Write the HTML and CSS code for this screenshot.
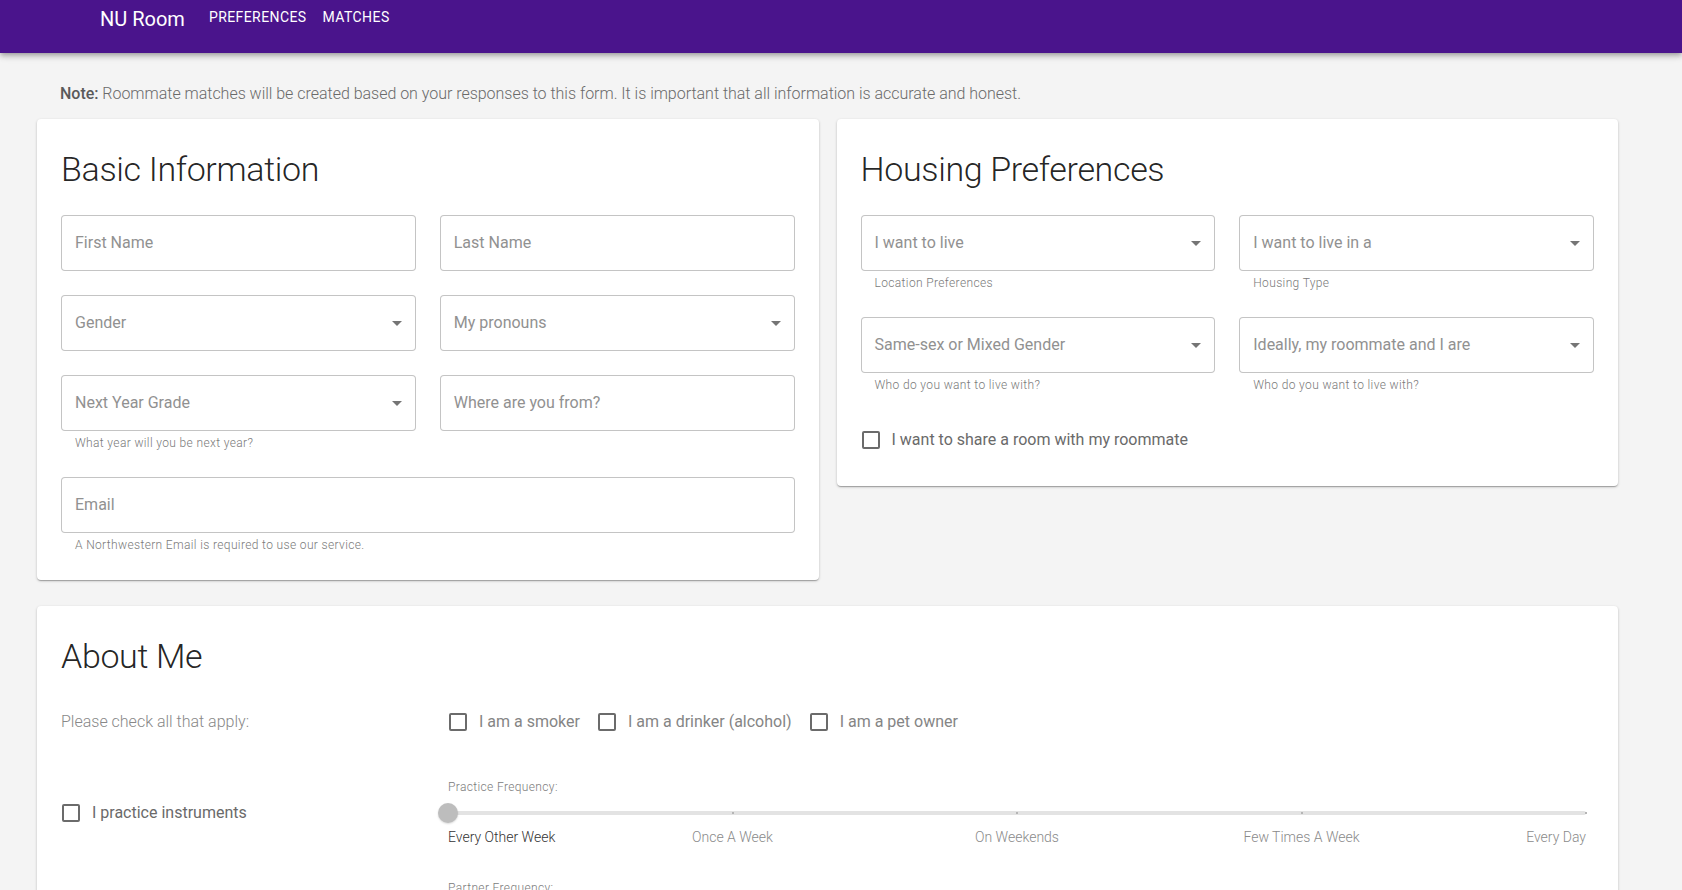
FILE: index.html
```html
<!DOCTYPE html>
<html lang="en">
<head>
<meta charset="utf-8">
<title>NU Room</title>
<link rel="stylesheet" href="styles.css">
</head>
<body>
<header class="appbar">
  <div class="brand">NU Room</div>
  <nav class="nav">
    <a class="nav-link" href="#">Preferences</a>
    <a class="nav-link" href="#">Matches</a>
  </nav>
</header>

<main class="page">
  <p class="note"><strong>Note:</strong> Roommate matches will be created based on your responses to this form. It is important that all information is accurate and honest.</p>

  <div class="top-row">
    <section class="card card-basic">
      <h2 class="card-title">Basic Information</h2>
      <div class="field-grid">
        <div class="field">
          <div class="input"><span class="ph">First Name</span></div>
        </div>
        <div class="field">
          <div class="input"><span class="ph">Last Name</span></div>
        </div>
        <div class="field">
          <div class="input"><span class="ph">Gender</span><svg class="arrow" viewBox="0 0 24 24"><path d="M7 10l5 5 5-5z"/></svg></div>
        </div>
        <div class="field">
          <div class="input"><span class="ph">My pronouns</span><svg class="arrow" viewBox="0 0 24 24"><path d="M7 10l5 5 5-5z"/></svg></div>
        </div>
        <div class="field">
          <div class="input"><span class="ph">Next Year Grade</span><svg class="arrow" viewBox="0 0 24 24"><path d="M7 10l5 5 5-5z"/></svg></div>
          <p class="helper">What year will you be next year?</p>
        </div>
        <div class="field">
          <div class="input"><span class="ph">Where are you from?</span></div>
        </div>
        <div class="field field-wide">
          <div class="input"><span class="ph">Email</span></div>
          <p class="helper">A Northwestern Email is required to use our service.</p>
        </div>
      </div>
    </section>

    <section class="card card-housing">
      <h2 class="card-title">Housing Preferences</h2>
      <div class="field-grid">
        <div class="field">
          <div class="input"><span class="ph">I want to live</span><svg class="arrow" viewBox="0 0 24 24"><path d="M7 10l5 5 5-5z"/></svg></div>
          <p class="helper">Location Preferences</p>
        </div>
        <div class="field">
          <div class="input"><span class="ph">I want to live in a</span><svg class="arrow" viewBox="0 0 24 24"><path d="M7 10l5 5 5-5z"/></svg></div>
          <p class="helper">Housing Type</p>
        </div>
        <div class="field">
          <div class="input"><span class="ph">Same-sex or Mixed Gender</span><svg class="arrow" viewBox="0 0 24 24"><path d="M7 10l5 5 5-5z"/></svg></div>
          <p class="helper">Who do you want to live with?</p>
        </div>
        <div class="field">
          <div class="input"><span class="ph">Ideally, my roommate and I are</span><svg class="arrow" viewBox="0 0 24 24"><path d="M7 10l5 5 5-5z"/></svg></div>
          <p class="helper">Who do you want to live with?</p>
        </div>
      </div>
      <div class="share-row">
        <label class="check"><span class="cbox"><span class="box"></span></span><span class="check-text dark">I want to share a room with my roommate</span></label>
      </div>
    </section>
  </div>

  <section class="card card-about">
    <h2 class="card-title">About Me</h2>
    <div class="about-grid">
      <div class="about-left row-apply">
        <span class="apply-text">Please check all that apply:</span>
      </div>
      <div class="about-right row-apply">
        <div class="check-group">
          <label class="check"><span class="cbox"><span class="box"></span></span><span class="check-text">I am a smoker</span></label>
          <label class="check"><span class="cbox"><span class="box"></span></span><span class="check-text">I am a drinker (alcohol)</span></label>
          <label class="check"><span class="cbox"><span class="box"></span></span><span class="check-text">I am a pet owner</span></label>
        </div>
      </div>

      <div class="about-left row-instr">
        <label class="check"><span class="cbox"><span class="box"></span></span><span class="check-text dark">I practice instruments</span></label>
      </div>
      <div class="about-right">
        <div class="slider-block">
          <p class="slider-label">Practice Frequency:</p>
          <div class="slider">
            <div class="track">
              <span class="tick"></span><span class="tick"></span><span class="tick"></span><span class="tick"></span>
            </div>
            <span class="thumb"></span>
          </div>
          <div class="marks">
            <span class="mark m1 active">Every Other Week</span>
            <span class="mark m2">Once A Week</span>
            <span class="mark m3">On Weekends</span>
            <span class="mark m4">Few Times A Week</span>
            <span class="mark m5">Every Day</span>
          </div>
        </div>
        <div class="slider-block">
          <p class="slider-label">Partner Frequency:</p>
          <div class="slider">
            <div class="track">
              <span class="tick"></span><span class="tick"></span><span class="tick"></span><span class="tick"></span>
            </div>
            <span class="thumb"></span>
          </div>
          <div class="marks">
            <span class="mark m1 active">Every Other Week</span>
            <span class="mark m2">Once A Week</span>
            <span class="mark m3">On Weekends</span>
            <span class="mark m4">Few Times A Week</span>
            <span class="mark m5">Every Day</span>
          </div>
        </div>
      </div>
    </div>
  </section>
</main>
</body>
</html>
```

FILE: styles.css
```css
* {
  box-sizing: border-box;
}

html, body {
  margin: 0;
  padding: 0;
}

body {
  background: #f4f4f4;
  font-family: "Roboto", "Liberation Sans", sans-serif;
  color: rgba(0, 0, 0, 0.87);
}

/* ---------- App bar ---------- */
.appbar {
  height: 53px;
  background: #4a148c;
  display: flex;
  align-items: flex-start;
  padding-left: 100px;
  box-shadow: 0 2px 4px -1px rgba(0, 0, 0, 0.2), 0 4px 5px 0 rgba(0, 0, 0, 0.14), 0 1px 10px 0 rgba(0, 0, 0, 0.12);
  position: relative;
  z-index: 2;
}

.brand {
  color: #fff;
  font-size: 20px;
  line-height: 24px;
  margin-top: 7px;
  margin-right: 24px;
  font-weight: 400;
}

.nav {
  display: flex;
  gap: 16px;
  margin-top: 9px;
}

.nav-link {
  color: #fff;
  text-decoration: none;
  text-transform: uppercase;
  font-size: 14px;
  line-height: 16px;
  font-weight: 400;
  letter-spacing: 0.03em;
}

/* ---------- Page ---------- */
.page {
  padding: 29px 64px 60px 37px;
}

.note {
  margin: 0 0 13px 23px;
  font-size: 16px;
  line-height: 24px;
  color: #6a6a6a;
  font-weight: 300;
  letter-spacing: -0.02px;
}

.note strong {
  font-weight: 500;
  color: #5a5a5a;
}

.top-row {
  display: grid;
  grid-template-columns: 1fr 1fr;
  column-gap: 18px;
  align-items: start;
}

.card {
  background: #fff;
  border-radius: 4px;
  box-shadow: 0 1px 3px 0 rgba(0, 0, 0, 0.2), 0 1px 1px 0 rgba(0, 0, 0, 0.14), 0 2px 1px -1px rgba(0, 0, 0, 0.12);
  padding: 30px 24px 25px;
}

.card-housing {
  padding-bottom: 22px;
}

.card-about {
  margin-top: 26px;
  padding-bottom: 40px;
}

.card-title {
  margin: 0 0 26px;
  font-size: 34px;
  line-height: 40px;
  font-weight: 300;
  letter-spacing: -0.35px;
  color: rgba(0, 0, 0, 0.87);
}

.card-about .card-title {
  margin-bottom: 22px;
}

/* ---------- Fields ---------- */
.field-grid {
  display: grid;
  grid-template-columns: 1fr 1fr;
  column-gap: 24px;
  row-gap: 24px;
}

.field-wide {
  grid-column: 1 / 3;
}

.input {
  height: 56px;
  border: 1px solid rgba(0, 0, 0, 0.23);
  border-radius: 4px;
  display: flex;
  align-items: center;
  padding: 0 6px 0 13px;
  background: #fff;
}

.ph {
  flex: 1;
  font-size: 16px;
  line-height: 16px;
  color: #919191;
  font-weight: 400;
}

.arrow {
  width: 24px;
  height: 24px;
  fill: rgba(0, 0, 0, 0.54);
  flex: none;
}

.helper {
  margin: 5px 0 3px 14px;
  font-size: 12px;
  line-height: 14px;
  letter-spacing: 0.03em;
  color: #7a7a7a;
  font-weight: 300;
}

/* ---------- Checkboxes ---------- */
.share-row {
  margin-top: 21px;
}

.check {
  display: inline-flex;
  align-items: center;
  margin-left: -14px;
  cursor: pointer;
}

.cbox {
  width: 45px;
  height: 48px;
  display: flex;
  align-items: center;
  padding-left: 15px;
  flex: none;
}

.box {
  width: 18px;
  height: 18px;
  border: 2px solid #6b6b6b;
  border-radius: 2px;
}

.check-text {
  font-size: 16px;
  line-height: 24px;
  color: #858585;
  font-weight: 400;
}

.check-text.dark {
  color: #6a6a6a;
}

/* ---------- About me ---------- */
.about-grid {
  display: grid;
  grid-template-columns: 387px 1fr;
  align-items: start;
}

.row-apply {
  height: 48px;
  display: flex;
  align-items: center;
}

.apply-text {
  font-size: 16px;
  line-height: 24px;
  color: #888;
  font-weight: 300;
}

.check-group {
  display: flex;
}

.check-group .check {
  margin-right: 3px;
}

.check-group .check + .check {
  margin-left: 0;
}

.row-instr {
  margin-top: 43px;
}

.about-right {
  padding-right: 8px;
}

.slider-block {
  padding-top: 34px;
}

.slider-label {
  margin: 0;
  font-size: 12px;
  line-height: 14px;
  letter-spacing: 0.03em;
  color: #7b7b7b;
  font-weight: 300;
}

.slider {
  position: relative;
  height: 24px;
  margin-top: 7px;
  display: flex;
  align-items: center;
}

.track {
  flex: 1;
  height: 4px;
  border-radius: 2px;
  background: #e3e3e3;
  display: grid;
  grid-template-columns: repeat(4, 1fr);
}

.tick {
  position: relative;
}

.tick::after {
  content: "";
  position: absolute;
  right: -1px;
  top: 1px;
  width: 2px;
  height: 2px;
  background: #b5b5b5;
}

.thumb {
  position: absolute;
  left: -10px;
  top: 2px;
  width: 20px;
  height: 20px;
  border-radius: 50%;
  background: #bdbdbd;
  box-shadow: 0 1px 2px rgba(0, 0, 0, 0.15);
}

.marks {
  display: grid;
  grid-template-columns: repeat(8, 1fr);
  margin-top: 2px;
}

.mark {
  font-size: 14px;
  line-height: 20px;
  color: #8a8a8a;
  font-weight: 300;
  white-space: nowrap;
}

.mark.active {
  color: #333;
}

.m1 { grid-column: 1 / 2; justify-self: start; }
.m2 { grid-column: 2 / 4; justify-self: center; }
.m3 { grid-column: 4 / 6; justify-self: center; }
.m4 { grid-column: 6 / 8; justify-self: center; }
.m5 { grid-column: 8 / 9; justify-self: end; }
```
